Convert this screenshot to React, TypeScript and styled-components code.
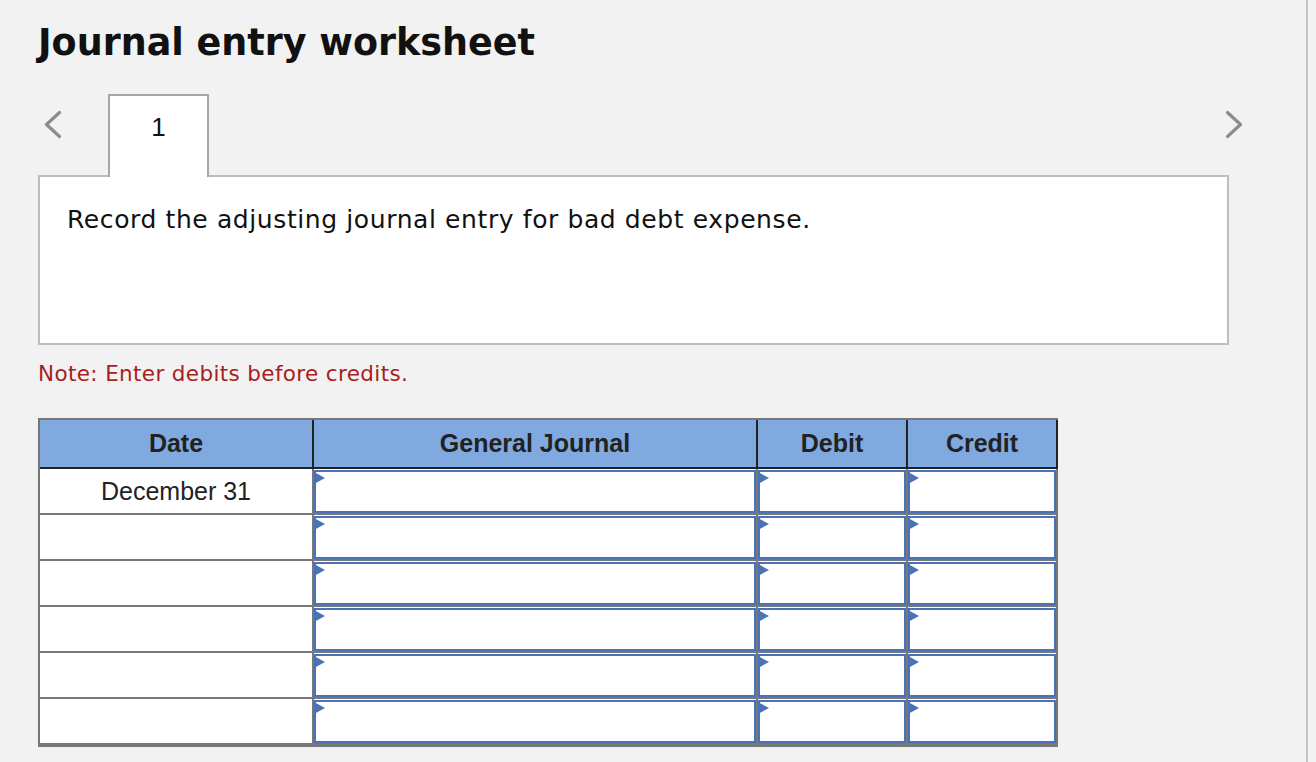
import React from "react";
import styled, { createGlobalStyle } from "styled-components";

const GlobalStyle = createGlobalStyle`
  html, body {
    margin: 0;
    padding: 0;
    background: #f2f2f2;
  }
  * { box-sizing: border-box; }
`;

const Page = styled.div`
  width: 1308px;
  min-height: 762px;
  border-right: 2px solid #c4c4c4;
  padding: 22px 0 0 38px;
  background: #f2f2f2;
`;

const Title = styled.h1`
  margin: 0;
  font-family: "DejaVu Sans", Verdana, sans-serif;
  font-weight: bold;
  font-size: 36.5px;
  line-height: 42px;
  color: #111;
`;

const NavRow = styled.div`
  display: flex;
  width: 1206px;
  height: 81px;
  margin-top: 30px;
  align-items: flex-start;
`;

const ChevronButton = styled.button<{ $side: "left" | "right" }>`
  background: none;
  border: none;
  padding: 0;
  margin-top: 16px;
  width: ${(p) => (p.$side === "left" ? "70px" : "20px")};
  margin-left: ${(p) => (p.$side === "right" ? "auto" : "0")};
  display: flex;
  justify-content: ${(p) => (p.$side === "left" ? "flex-start" : "flex-end")};
  padding-left: ${(p) => (p.$side === "left" ? "5px" : "0")};
  cursor: pointer;
`;

const Tab = styled.div`
  position: relative;
  z-index: 1;
  width: 101px;
  height: 83px;
  margin-bottom: -2px;
  background: #fff;
  border: 2px solid #a6a6a6;
  border-bottom: none;
  text-align: center;
  padding-top: 16px;
  font-family: "Liberation Sans", Arial, sans-serif;
  font-size: 26px;
  color: #111;
`;

const PromptBox = styled.div`
  width: 1191px;
  height: 170px;
  background: #fff;
  border: 2px solid #bdbdbd;
  padding: 28px 0 0 27px;
  font-family: "DejaVu Sans", Verdana, sans-serif;
  font-size: 25px;
  letter-spacing: 0.6px;
  color: #111;
`;

const Note = styled.p`
  margin: 16px 0 0 0;
  font-family: "DejaVu Sans", Verdana, sans-serif;
  font-size: 21.5px;
  letter-spacing: 0.36px;
  line-height: 26px;
  color: #a8201c;
`;

const Table = styled.div`
  margin-top: 31px;
  width: 1020px;
  border: 2px solid #777;
  border-right: none;
  font-family: "Liberation Sans", Arial, sans-serif;
`;

const cols = "274px 444px 150px 150px";

const HeaderRow = styled.div`
  display: grid;
  grid-template-columns: ${cols};
  height: 49px;
  border-bottom: 2px solid #222;
  background: #80a9df;
`;

const HeaderCell = styled.div`
  border-right: 2px solid #222;
  display: flex;
  align-items: center;
  justify-content: center;
  font-weight: bold;
  font-size: 25px;
  color: #222;
`;

const BodyRow = styled.div`
  display: grid;
  grid-template-columns: ${cols};
  height: 46px;
  border-bottom: 2px solid #777;
  background: #fff;
`;

const DateCell = styled.div`
  border-right: 2px solid #777;
  display: flex;
  align-items: center;
  justify-content: center;
  font-size: 25px;
  color: #222;
`;

const InputCell = styled.div`
  position: relative;
  border-right: 2px solid #777;
  padding: 1px 0 0 0;
`;

const EntryInput = styled.input`
  display: block;
  width: 100%;
  height: 43px;
  border: 2px solid #4a72b7;
  background: #fff;
  margin: 0;
  padding: 0 8px;
  font-family: "Liberation Sans", Arial, sans-serif;
  font-size: 20px;
  outline: none;
`;

const Flag = styled.span`
  position: absolute;
  left: 0;
  top: 3px;
  width: 0;
  height: 0;
  border-top: 6.5px solid transparent;
  border-bottom: 6.5px solid transparent;
  border-left: 11px solid #4a72b7;
  pointer-events: none;
`;

const Chevron = ({ dir }: { dir: "left" | "right" }) => (
  <svg width="20" height="30" viewBox="0 0 20 30">
    <polyline
      points={dir === "left" ? "16.5,2.5 3.5,14.5 16.5,26.5" : "3.5,2.5 16.5,14.5 3.5,26.5"}
      fill="none"
      stroke="#8c8c8c"
      strokeWidth="3.2"
      strokeLinecap="round"
      strokeLinejoin="round"
    />
  </svg>
);

const rows = ["December 31", "", "", "", "", ""];

const Field = () => (
  <InputCell>
    <EntryInput type="text" />
    <Flag />
  </InputCell>
);

export default function App() {
  return (
    <>
      <GlobalStyle />
      <Page>
        <Title>Journal entry worksheet</Title>
        <NavRow>
          <ChevronButton $side="left" aria-label="Previous">
            <Chevron dir="left" />
          </ChevronButton>
          <Tab>1</Tab>
          <ChevronButton $side="right" aria-label="Next">
            <Chevron dir="right" />
          </ChevronButton>
        </NavRow>
        <PromptBox>Record the adjusting journal entry for bad debt expense.</PromptBox>
        <Note>Note: Enter debits before credits.</Note>
        <Table>
          <HeaderRow>
            <HeaderCell>Date</HeaderCell>
            <HeaderCell>General Journal</HeaderCell>
            <HeaderCell>Debit</HeaderCell>
            <HeaderCell>Credit</HeaderCell>
          </HeaderRow>
          {rows.map((d, i) => (
            <BodyRow key={i}>
              <DateCell>{d}</DateCell>
              <Field />
              <Field />
              <Field />
            </BodyRow>
          ))}
        </Table>
      </Page>
    </>
  );
}
